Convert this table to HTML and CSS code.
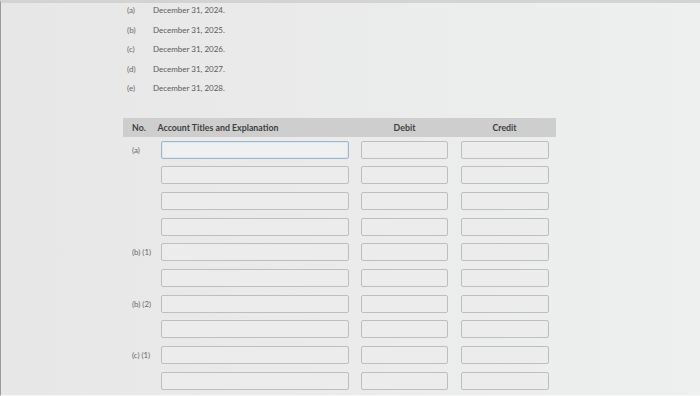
FILE: index.html
```html
<!DOCTYPE html>
<html lang="en">
<head>
    <meta charset="UTF-8">
    <meta name="viewport" content="width=device-width, initial-scale=1.0">
    <title>Journal Entries</title>
    <link rel="stylesheet" href="styles.css">
</head>
<body>
    <div class="screen">
        <ul class="dates">
            <li><span class="tag">(a)</span>December 31, 2024.</li>
            <li><span class="tag">(b)</span>December 31, 2025.</li>
            <li><span class="tag">(c)</span>December 31, 2026.</li>
            <li><span class="tag">(d)</span>December 31, 2027.</li>
            <li><span class="tag">(e)</span>December 31, 2028.</li>
        </ul>

        <div class="journal">
            <div class="journal-head">
                <span class="col-no">No.</span>
                <span class="col-account">Account Titles and Explanation</span>
                <span class="col-amount">Debit</span>
                <span class="col-amount">Credit</span>
            </div>

            <div class="journal-rows">
                <span class="row-label">(a)</span>
                <input type="text" class="entry entry-focus">
                <input type="text" class="entry">
                <input type="text" class="entry">

                <span class="row-label"></span>
                <input type="text" class="entry">
                <input type="text" class="entry">
                <input type="text" class="entry">

                <span class="row-label"></span>
                <input type="text" class="entry">
                <input type="text" class="entry">
                <input type="text" class="entry">

                <span class="row-label"></span>
                <input type="text" class="entry">
                <input type="text" class="entry">
                <input type="text" class="entry">

                <span class="row-label">(b) (1)</span>
                <input type="text" class="entry">
                <input type="text" class="entry">
                <input type="text" class="entry">

                <span class="row-label"></span>
                <input type="text" class="entry">
                <input type="text" class="entry">
                <input type="text" class="entry">

                <span class="row-label">(b) (2)</span>
                <input type="text" class="entry">
                <input type="text" class="entry">
                <input type="text" class="entry">

                <span class="row-label"></span>
                <input type="text" class="entry">
                <input type="text" class="entry">
                <input type="text" class="entry">

                <span class="row-label">(c) (1)</span>
                <input type="text" class="entry">
                <input type="text" class="entry">
                <input type="text" class="entry">

                <span class="row-label"></span>
                <input type="text" class="entry">
                <input type="text" class="entry">
                <input type="text" class="entry">
            </div>
        </div>
    </div>
</body>
</html>
```

FILE: styles.css
```css
body {
    margin: 0;
    padding: 0;
    background: linear-gradient(to right, #e7e7e7, #eeefef);
    font-family: 'Lato', 'Liberation Sans', sans-serif;
    color: #555;
}

.screen {
    height: 392px;
    border-top: 3px solid #d3d3d3;
    border-left: 1px solid #9a9a9a;
    border-bottom: 1px solid #f7f7f7;
    overflow: hidden;
}

.dates {
    list-style: none;
    margin: 0;
    padding: 0 0 0 126px;
}

.dates li {
    height: 19.5px;
    line-height: 14px;
    font-size: 8px;
    color: #5a5a5a;
}

.tag {
    display: inline-block;
    width: 26px;
    color: #6a6a6a;
}

/* journal table: label column, account, debit, credit */
.journal {
    margin: 17px 0 0 122px;
    width: 433px;
}

.journal-head {
    display: grid;
    grid-template-columns: 25px 188px 87px 88px;
    column-gap: 12.5px;
    height: 19px;
    line-height: 19px;
    background-color: #cecece;
    font-size: 8.8px;
    font-weight: bold;
    color: #3f3f3f;
}

.col-no {
    padding-left: 9px;
    white-space: nowrap;
}

.col-account {
    margin-left: -3px;
}

.col-amount {
    text-align: center;
}

.journal-rows {
    display: grid;
    grid-template-columns: 25px 188px 87px 88px;
    column-gap: 12.5px;
    row-gap: 7.7px;
    margin-top: 4px;
}

.row-label {
    padding-left: 9px;
    font-size: 7.8px;
    line-height: 18px;
    white-space: nowrap;
    color: #666;
}

.entry {
    box-sizing: border-box;
    height: 18px;
    width: 100%;
    margin: 0;
    border: 1px solid #bebebe;
    border-radius: 2px;
    background-color: #ececec;
}

.entry-focus {
    border-color: #9fb6cf;
    box-shadow: inset 0 0 0 1px #dfe6ee;
    background-color: #eef0f2;
}
```
